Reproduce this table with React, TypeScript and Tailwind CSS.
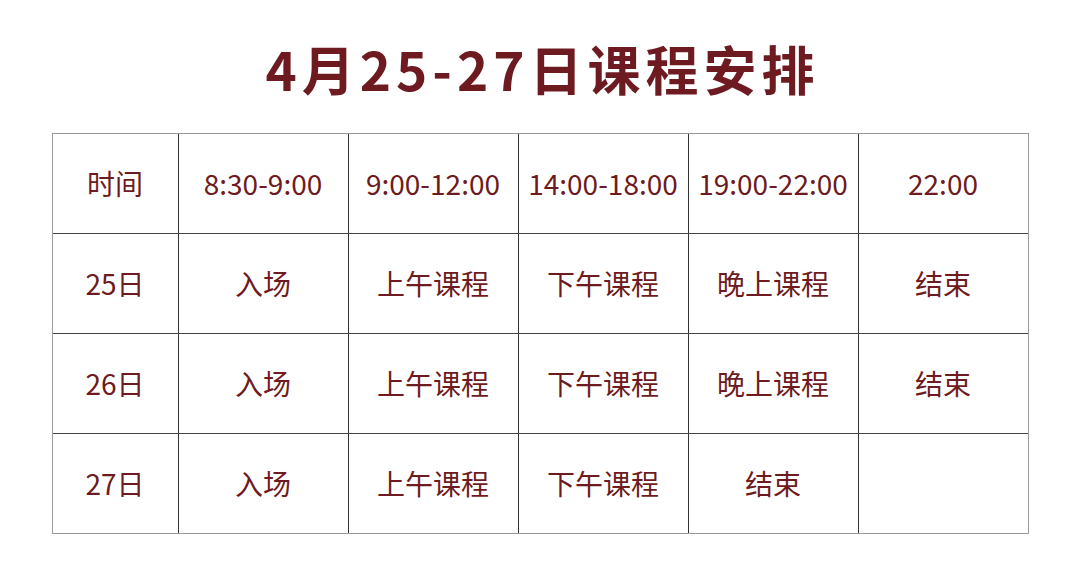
const header = ['时间', '8:30-9:00', '9:00-12:00', '14:00-18:00', '19:00-22:00', '22:00']

const rows = [
  ['25日', '入场', '上午课程', '下午课程', '晚上课程', '结束'],
  ['26日', '入场', '上午课程', '下午课程', '晚上课程', '结束'],
  ['27日', '入场', '上午课程', '下午课程', '结束', ''],
]

export default function App() {
  const all = [header, ...rows]
  return (
    <div
      className="w-[1080px] h-[580px] bg-white flex flex-col items-center"
      style={{ fontFamily: '"Noto Sans CJK SC", "Noto Sans", sans-serif' }}
    >
      <h1 className="mt-[33px] h-[70px] text-[53px] leading-[70px] font-bold text-[#6d1a20] tracking-[5px] pl-[5px]">
        4月25-27日课程安排
      </h1>
      <div className="mt-[30px] border border-[#9a9a9a]">
        {all.map((row, r) => (
          <div key={r} className={`flex ${r > 0 ? 'border-t border-[#444]' : ''}`}>
            {row.map((cell, c) => (
              <div
                key={c}
                className={`h-[99px] pb-[2px] flex items-center justify-center text-[28px] text-[#6d1a20] ${
                  c === 0 ? 'w-[125px]' : 'w-[170px] border-l border-[#333]'
                }`}
              >
                {cell}
              </div>
            ))}
          </div>
        ))}
      </div>
    </div>
  )
}
